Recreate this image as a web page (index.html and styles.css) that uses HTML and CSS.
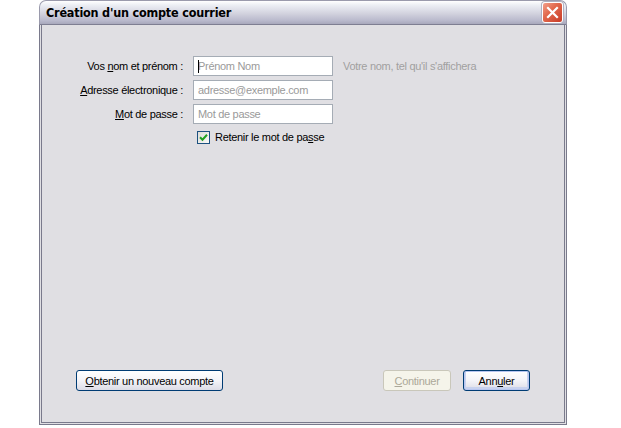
FILE: index.html
```html
<!DOCTYPE html>
<html lang="fr">
<head>
<meta charset="utf-8">
<title>Création d'un compte courrier</title>
<link rel="stylesheet" href="styles.css">
</head>
<body>
<div class="window">
  <div class="titlebar">
    <span class="title">Création d'un compte courrier</span>
    <span class="close">
      <svg width="13" height="13" viewBox="0 0 13 13"><path d="M2 2 L11 11 M11 2 L2 11" stroke="#fff" stroke-width="2.2" stroke-linecap="square"/></svg>
    </span>
  </div>
  <div class="client">
    <div class="form">
      <div class="row">
        <label class="label">Vos <u>n</u>om et prénom :</label>
        <div class="input"><span class="caret"></span>Prénom Nom</div>
        <span class="hint">Votre nom, tel qu'il s'affichera</span>
      </div>
      <div class="row">
        <label class="label"><u>A</u>dresse électronique :</label>
        <div class="input">adresse@exemple.com</div>
      </div>
      <div class="row">
        <label class="label"><u>M</u>ot de passe :</label>
        <div class="input">Mot de passe</div>
      </div>
      <div class="row check-row">
        <span class="checkbox">
          <svg width="9" height="9" viewBox="0 0 9 9"><path d="M1 4.2 L3.5 6.7 L8 1.8" stroke="#21a121" stroke-width="2" fill="none"/></svg>
        </span>
        <span class="check-label">Retenir le mot de pa<u>s</u>se</span>
      </div>
    </div>
    <div class="buttons">
      <button class="btn btn-new"><u>O</u>btenir un nouveau compte</button>
      <div class="right-buttons">
        <button class="btn btn-disabled"><u>C</u>ontinuer</button>
        <button class="btn btn-default">Ann<u>u</u>ler</button>
      </div>
    </div>
  </div>
</div>
</body>
</html>
```

FILE: styles.css
```css
html, body {
  margin: 0;
  padding: 0;
  background: #ffffff;
}
body {
  font-family: "Liberation Sans", Arial, sans-serif;
  font-size: 11px;
  letter-spacing: -0.3px;
  color: #000;
}
.window {
  margin-left: 39px;
  width: 528px;
  height: 425px;
  display: flex;
  flex-direction: column;
}
.titlebar {
  height: 25px;
  box-sizing: border-box;
  border: 1px solid #9a9aac;
  border-bottom: 1px solid #7e7e92;
  border-radius: 7px 7px 0 0;
  background: linear-gradient(to bottom, #ffffff 0%, #eceef4 18%, #d2d2de 55%, #b9b9cc 85%, #a8a8bc 100%);
  display: flex;
  align-items: center;
  justify-content: space-between;
  padding: 0 3px 0 6px;
}
.title {
  font-family: "DejaVu Sans Condensed", "Liberation Sans", sans-serif;
  font-weight: bold;
  font-size: 12.5px;
  letter-spacing: -0.2px;
  color: #000;
}
.close {
  width: 21px;
  height: 21px;
  box-sizing: border-box;
  border: 1px solid #ffffff;
  border-radius: 3px;
  background: linear-gradient(135deg, #f3a08c 0%, #e26a4e 40%, #c73a26 100%);
  display: flex;
  align-items: center;
  justify-content: center;
  box-shadow: 0 0 0 1px #b0b0c0;
}
.client {
  flex: 1;
  background: #e0dfe3;
  border-left: 3px double #7a7a8c;
  border-right: 3px double #7a7a8c;
  border-bottom: 3px double #7a7a8c;
  display: flex;
  flex-direction: column;
  justify-content: space-between;
  padding: 31px 0 31px 0;
}
.form {
  display: flex;
  flex-direction: column;
  gap: 4px;
}
.row {
  display: flex;
  align-items: center;
  height: 20px;
}
.label {
  width: 141px;
  text-align: right;
  flex: none;
}
.input {
  margin-left: 10px;
  width: 140px;
  height: 20px;
  box-sizing: border-box;
  background: #fff;
  border: 1px solid #a5acb5;
  color: #9a9a9a;
  padding: 0 0 0 4px;
  line-height: 18px;
  position: relative;
}
.caret {
  position: absolute;
  left: 4px;
  top: 3px;
  width: 1px;
  height: 13px;
  background: #000;
}
.hint {
  margin-left: 10px;
  color: #a0a0a0;
}
.check-row {
  padding-left: 155px;
  height: 16px;
  margin-top: 1px;
}
.checkbox {
  width: 13px;
  height: 13px;
  box-sizing: border-box;
  border: 1px solid #1c5180;
  background: linear-gradient(135deg, #dcdcd7 0%, #fafaf8 100%);
  display: flex;
  align-items: center;
  justify-content: center;
}
.check-label {
  margin-left: 5px;
}
.buttons {
  display: flex;
  justify-content: space-between;
  padding: 0 34px 0 34px;
}
.right-buttons {
  display: flex;
  gap: 12px;
}
.btn {
  font-family: "Liberation Sans", Arial, sans-serif;
  font-size: 11px;
  letter-spacing: -0.3px;
  white-space: nowrap;
  height: 21px;
  box-sizing: border-box;
  border: 1px solid #003c74;
  border-radius: 3px;
  background: linear-gradient(to bottom, #ffffff 0%, #f4f4f8 50%, #dcdce6 100%);
  color: #000;
  padding: 0;
  margin: 0;
}
.btn-new {
  width: 147px;
}
.btn-disabled {
  width: 68px;
  border-color: #c9c7ba;
  background: #f5f4ea;
  color: #aca899;
}
.btn-default {
  width: 67px;
  box-shadow: inset 0 0 0 1px #b8c6f0, inset 0 -1px 0 2px #c8d2ee;
}
```
